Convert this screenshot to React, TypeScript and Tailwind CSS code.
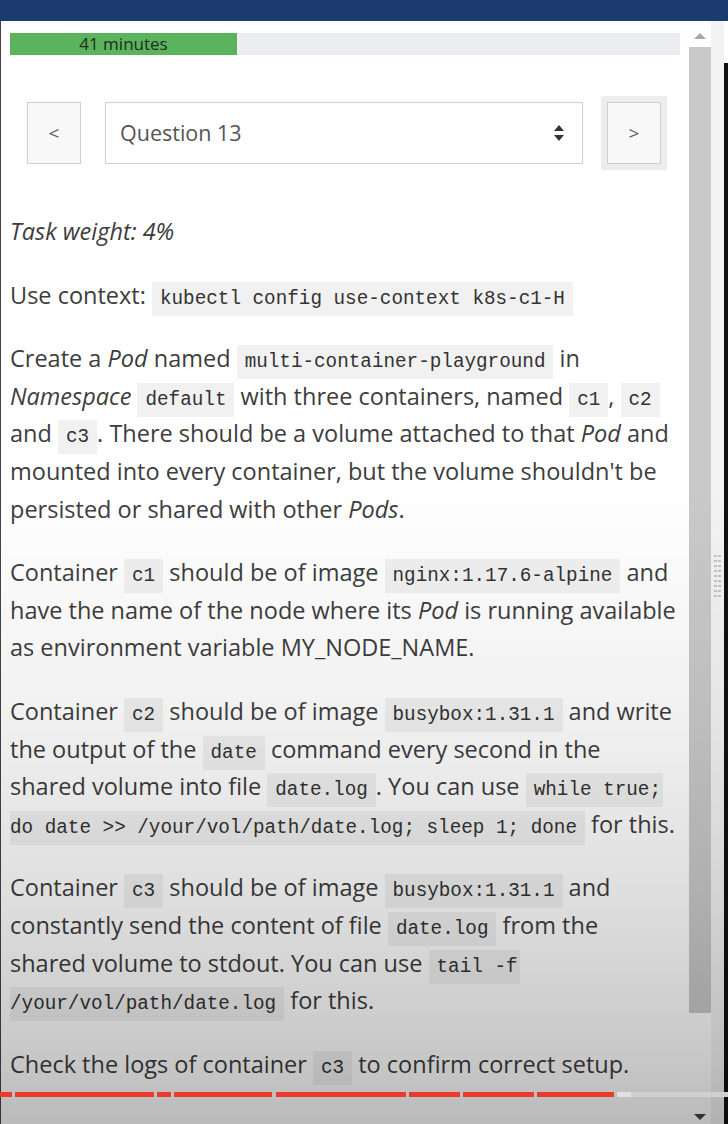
import React from "react";

const prose = "font-['Open_Sans',sans-serif]";

// side: which end of a wrapped code span this piece is
function Code({ children, side = "both" }: { children: React.ReactNode; side?: "both" | "start" | "end" }) {
  const pad =
    side === "start" ? "pl-[8px] pr-[2px]" : side === "end" ? "pl-0 pr-[8px]" : "px-[8px]";
  return (
    <code
      className={`bg-[#f1f1f1] ${pad} py-[6px] font-['Liberation_Mono',monospace] text-[19.3px] leading-[20px] text-[#333]`}
    >
      {children}
    </code>
  );
}

function Para({ lines }: { lines: React.ReactNode[] }) {
  return (
    <div className="mb-[26px]">
      {lines.map((line, i) => (
        <div key={i} className="h-[37.6px] whitespace-nowrap leading-[37.6px]">
          {line}
        </div>
      ))}
    </div>
  );
}

const segments = [
  [0, 12],
  [15, 154],
  [157, 171],
  [174, 272],
  [276, 406],
  [409, 460],
  [463, 534],
  [537, 614],
];

function VideoBar() {
  return (
    <div className="pointer-events-none absolute left-0 right-0 top-[1092px] flex h-[5px]">
      {segments.map(([a, b], i) => (
        <div
          key={i}
          className="h-full bg-[#ee3a2c]"
          style={{ marginLeft: i === 0 ? 0 : a - segments[i - 1][1], width: b - a }}
        />
      ))}
      <div className="ml-[3px] h-full w-[14px] bg-[#e2e2e2]" />
      <div className="h-full flex-1 bg-[#cfcfcf]" />
    </div>
  );
}

function Scrollbar() {
  return (
    <div className="flex w-[48px] shrink-0">
      <div className="flex w-[31px] flex-col bg-white pl-[9px]">
        <div className="flex w-[22px] flex-1 flex-col items-center">
          <div className="mt-[12px] h-0 w-0 border-x-[6px] border-b-[6px] border-x-transparent border-b-[#a8a8a8]" />
          <div className="mt-[8px] h-[966px] w-[22px] bg-[#c9c9c9]" />
          <div className="flex-1" />
          <div className="mb-[4px] h-0 w-0 border-x-[6px] border-t-[6px] border-x-transparent border-t-[#444]" />
        </div>
      </div>
      <div className="flex w-[13px] flex-col items-center bg-[#f3f3f3]">
        <svg className="mt-[532px]" width="8" height="48" viewBox="0 0 8 48">
          {Array.from({ length: 9 }).map((_, r) => (
            <g key={r} fill="#c4c4c4">
              <rect x="0" y={r * 5 + 2} width="3" height="2" />
              <rect x="4" y={r * 5 + 2} width="3" height="2" />
            </g>
          ))}
        </svg>
      </div>
      <div className="mt-[42px] w-[4px] bg-[#111]" />
    </div>
  );
}

export default function App() {
  return (
    <div className={`relative h-[1124px] w-[728px] overflow-hidden bg-white ${prose}`}>
      <div className="h-[21px] bg-[#1b3a6e]" />
      <div className="flex h-[1103px]">
        <div className="min-w-0 flex-1 border-l border-[#444] pl-[9px] pt-[12px] text-[23.5px] text-[#3d3d3d]">
          {/* timer */}
          <div className="flex h-[22px] bg-[#ebedf0]">
            <div className="flex w-[227px] items-center justify-center bg-[#5cb35d] text-[17px] text-[#1e2e1e]">
              41 minutes
            </div>
          </div>

          {/* question nav */}
          <div className="mt-[47px] flex h-[62px] items-stretch pl-[17px]">
            <button className="w-[54px] border border-[#cfcfcf] bg-[#f8f8f8] text-[19px] text-[#555]">
              &lt;
            </button>
            <div className="ml-[24px] flex w-[478px] items-center justify-between border border-[#cfcfcf] bg-white pl-[14px] pr-[18px] text-[21.5px] text-[#555]">
              <span>Question 13</span>
              <svg width="10" height="16" viewBox="0 0 10 16">
                <path d="M5 0 L10 6 L0 6 Z M0 10 L10 10 L5 16 Z" fill="#333" />
              </svg>
            </div>
            <button className="ml-[24px] w-[54px] border border-[#cfcfcf] bg-[#f8f8f8] text-[19px] text-[#555] shadow-[0_0_0_6px_#ededed]">
              &gt;
            </button>
          </div>

          {/* task text */}
          <div className="mt-[49px]">
            <Para lines={[<i>Task weight: 4%</i>]} />
            <Para
              lines={[
                <>
                  Use context: <Code>kubectl config use-context k8s-c1-H</Code>
                </>,
              ]}
            />
            <Para
              lines={[
                <>
                  Create a <i>Pod</i> named <Code>multi-container-playground</Code> in
                </>,
                <>
                  <i>Namespace</i> <Code>default</Code> with three containers, named <Code>c1</Code>,{" "}
                  <Code>c2</Code>
                </>,
                <>
                  and <Code>c3</Code>. There should be a volume attached to that <i>Pod</i> and
                </>,
                <>mounted into every container, but the volume shouldn't be</>,
                <>
                  persisted or shared with other <i>Pods</i>.
                </>,
              ]}
            />
            <Para
              lines={[
                <>
                  Container <Code>c1</Code> should be of image <Code>nginx:1.17.6-alpine</Code> and
                </>,
                <>
                  have the name of the node where its <i>Pod</i> is running available
                </>,
                <>as environment variable MY_NODE_NAME.</>,
              ]}
            />
            <Para
              lines={[
                <>
                  Container <Code>c2</Code> should be of image <Code>busybox:1.31.1</Code> and write
                </>,
                <>
                  the output of the <Code>date</Code> command every second in the
                </>,
                <>
                  shared volume into file <Code>date.log</Code>. You can use{" "}
                  <Code side="start">while true;</Code>
                </>,
                <>
                  <Code side="end">do date &gt;&gt; /your/vol/path/date.log; sleep 1; done</Code> for this.
                </>,
              ]}
            />
            <Para
              lines={[
                <>
                  Container <Code>c3</Code> should be of image <Code>busybox:1.31.1</Code> and
                </>,
                <>
                  constantly send the content of file <Code>date.log</Code> from the
                </>,
                <>
                  shared volume to stdout. You can use <Code side="start">tail -f</Code>
                </>,
                <>
                  <Code side="end">/your/vol/path/date.log</Code> for this.
                </>,
              ]}
            />
            <Para
              lines={[
                <>
                  Check the logs of container <Code>c3</Code> to confirm correct setup.
                </>,
              ]}
            />
          </div>
        </div>
        <Scrollbar />
      </div>

      {/* video player shading */}
      <div className="pointer-events-none absolute inset-x-0 bottom-0 top-[480px] bg-[linear-gradient(to_bottom,rgba(0,0,0,0)_0%,rgba(0,0,0,0.05)_34%,rgba(0,0,0,0.13)_65%,rgba(0,0,0,0.22)_90%,rgba(0,0,0,0.27)_100%)]" />
      <VideoBar />
    </div>
  );
}
